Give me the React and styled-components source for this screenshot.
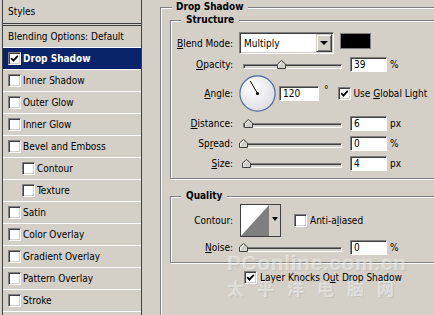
import styled, { createGlobalStyle } from "styled-components";

const FONT = `"DejaVu Sans Condensed", "Liberation Sans", sans-serif`;

const GlobalStyle = createGlobalStyle`
  html, body {
    margin: 0;
    padding: 0;
    background: #d4d0c8;
    overflow: hidden;
  }
  body {
    font-family: ${FONT};
    font-size: 10px;
    color: #000;
  }
`;

const Window = styled.div`
  position: relative;
  display: flex;
  width: 434px;
  height: 315px;
  overflow: hidden;
  background: #d4d0c8;
`;

const StylesPanel = styled.div`
  flex: 0 0 140px;
  box-sizing: border-box;
  margin-left: 2px;
  height: 100%;
  border-left: 1px solid #404040;
  border-right: 1px solid #404040;
`;

const PanelHead = styled.div`
  height: 23px;
  line-height: 23px;
  padding-left: 5px;
  border-bottom: 3px double #404040;
`;

const StyleRow = styled.div`
  display: flex;
  align-items: center;
  height: 21px;
  padding-left: ${(p) => (p.$sub ? 19 : 5)}px;
  border-bottom: 1px solid #fff;
  background: ${(p) => (p.$selected ? "#0a246a" : "transparent")};
  color: ${(p) => (p.$selected ? "#fff" : "#000")};
  font-weight: ${(p) => (p.$selected ? "bold" : "normal")};
  white-space: nowrap;
`;

const Box = styled.span`
  flex: 0 0 auto;
  display: inline-flex;
  align-items: center;
  justify-content: center;
  box-sizing: border-box;
  width: 13px;
  height: 13px;
  margin-right: ${(p) => p.$gap ?? 2}px;
  margin-left: ${(p) => p.$left ?? 0}px;
  background: #fff;
  border: 1px solid;
  border-color: #808080 #fff #fff #808080;
  box-shadow: inset 1px 1px 0 #404040, inset -1px -1px 0 #d4d0c8;
`;

function Checkbox({ checked, gap, left }) {
  return (
    <Box $gap={gap} $left={left}>
      {checked && (
        <svg width="9" height="9" viewBox="0 0 9 9">
          <path d="M1.2 4.2 L3.4 6.6 L7.8 1.8" fill="none" stroke="#000" strokeWidth="1.8" />
        </svg>
      )}
    </Box>
  );
}

const Main = styled.div`
  flex: 1;
  padding: 7px 0 0 18px;
`;

const Group = styled.div`
  position: relative;
  box-sizing: border-box;
  width: ${(p) => p.$w}px;
  height: ${(p) => (p.$h ? `${p.$h}px` : "auto")};
  margin-top: ${(p) => p.$top ?? 0}px;
  padding: ${(p) => p.$pad};
  border: 1px solid #808080;
  box-shadow: inset 1px 1px 0 #fff, 1px 1px 0 #fff;
`;

const Legend = styled.span`
  position: absolute;
  top: -8px;
  left: ${(p) => p.$left}px;
  padding: 0 ${(p) => p.$padX}px;
  line-height: 14px;
  background: #d4d0c8;
  font-weight: bold;
`;

const Row = styled.div`
  display: flex;
  align-items: center;
  height: ${(p) => p.$h}px;
  white-space: nowrap;
`;

const Label = styled.span`
  flex: 0 0 62px;
  margin-right: 6px;
  text-align: right;
`;

const Key = styled.span`
  text-decoration: underline;
  text-underline-offset: 1px;
`;

const Select = styled.div`
  display: flex;
  align-items: center;
  justify-content: space-between;
  box-sizing: border-box;
  width: 95px;
  height: 22px;
  padding: 0 1px 0 4px;
  background: #fff;
  border: 1px solid;
  border-color: #808080 #fff #fff #808080;
  box-shadow: inset 1px 1px 0 #404040, inset -1px -1px 0 #d4d0c8;
`;

const DropButton = styled.span`
  display: flex;
  align-items: center;
  justify-content: center;
  box-sizing: border-box;
  width: 16px;
  height: 18px;
  background: #d4d0c8;
  border: 1px solid;
  border-color: #d4d0c8 #404040 #404040 #d4d0c8;
  box-shadow: inset 1px 1px 0 #fff, inset -1px -1px 0 #808080;

  &::after {
    content: "";
    border-left: 4px solid transparent;
    border-right: 4px solid transparent;
    border-top: 4px solid #000;
  }
`;

const Swatch = styled.span`
  align-self: flex-start;
  box-sizing: border-box;
  width: 31px;
  height: 16px;
  margin: 1px 0 0 6px;
  background: #000;
  border: 1px solid #808080;
`;

const Slider = styled.div`
  position: relative;
  flex: 0 0 99px;
  margin-left: 4px;
  height: 9px;
  display: flex;
  align-items: flex-end;
`;

const Track = styled.div`
  box-sizing: border-box;
  width: 100%;
  height: 5px;
  background: #d4d0c8;
  border: 1px solid;
  border-color: #808080 #fff #fff #808080;
  box-shadow: inset 1px 1px 0 #404040;
`;

const Thumb = styled.svg`
  position: absolute;
  bottom: 0;
  width: 9px;
  height: 9px;
`;

function Range({ pos }) {
  return (
    <Slider>
      <Track />
      <Thumb viewBox="0 0 9 9" style={{ left: `calc(${pos}% - 4.5px)` }}>
        <polygon points="0.5,8.5 0.5,4 4.5,0.5 8.5,4 8.5,8.5" fill="#d4d0c8" stroke="#404040" />
        <polyline points="1.5,7.5 1.5,4.4 4.5,1.8" fill="none" stroke="#fff" />
      </Thumb>
    </Slider>
  );
}

const Field = styled.div`
  flex: 0 0 auto;
  box-sizing: border-box;
  width: ${(p) => p.$w ?? 37}px;
  height: 15px;
  margin-left: ${(p) => p.$ml ?? 8}px;
  padding-left: 3px;
  line-height: 13px;
  background: #fff;
  border: 1px solid;
  border-color: #808080 #fff #fff #808080;
  box-shadow: inset 1px 1px 0 #404040;
`;

const Unit = styled.span`
  margin-left: 3px;
`;

const Degree = styled.span`
  align-self: flex-start;
  margin: 10px 0 0 5px;
`;

const CheckLabel = styled.span`
  display: inline-flex;
  align-items: center;
  margin-left: ${(p) => p.$ml ?? 0}px;
`;

const ContourPick = styled.div`
  display: flex;
  box-sizing: border-box;
  width: 41px;
  height: 33px;
  margin-left: 1px;
  border: 1px solid #404040;
  background: #d4d0c8;
`;

const ContourArrow = styled.span`
  flex: 1;
  display: flex;
  justify-content: center;
  padding-top: 12px;

  &::after {
    content: "";
    height: 0;
    border-left: 3px solid transparent;
    border-right: 3px solid transparent;
    border-top: 4px solid #000;
  }
`;

const KnockRow = styled.div`
  display: flex;
  align-items: center;
  height: 13px;
  margin: 8px 0 0 74px;
  white-space: nowrap;
`;

const Watermark = styled.div`
  position: absolute;
  left: ${(p) => p.$x}px;
  top: ${(p) => p.$y}px;
  font-family: ${(p) => (p.$cjk ? `"Noto Sans CJK SC", sans-serif` : `"Liberation Sans", sans-serif`)};
  font-size: ${(p) => p.$size}px;
  line-height: ${(p) => p.$lh}px;
  font-weight: bold;
  letter-spacing: ${(p) => p.$ls}px;
  color: rgba(255, 255, 255, 0.42);
  text-shadow: 1px 1px 0 rgba(160, 156, 150, 0.25);
  white-space: nowrap;
  pointer-events: none;
`;

const effects = [
  { name: "Drop Shadow", checked: true, selected: true },
  { name: "Inner Shadow" },
  { name: "Outer Glow" },
  { name: "Inner Glow" },
  { name: "Bevel and Emboss" },
  { name: "Contour", sub: true },
  { name: "Texture", sub: true },
  { name: "Satin" },
  { name: "Color Overlay" },
  { name: "Gradient Overlay" },
  { name: "Pattern Overlay" },
  { name: "Stroke" },
];

function AngleDial({ angle }) {
  const r = 14.5;
  const a = (angle * Math.PI) / 180;
  const x = 18.5 + Math.cos(a) * r;
  const y = 18.5 - Math.sin(a) * r;
  return (
    <svg width="37" height="37" viewBox="0 0 37 37">
      <defs>
        <radialGradient id="dialFill" cx="0.4" cy="0.35" r="0.7">
          <stop offset="0" stopColor="#ffffff" />
          <stop offset="1" stopColor="#dcdce2" />
        </radialGradient>
      </defs>
      <circle cx="18.5" cy="18.5" r="17.6" fill="url(#dialFill)" stroke="#4a67a0" strokeWidth="1.2" />
      <line x1="18.5" y1="18.5" x2={x} y2={y} stroke="#000" strokeWidth="1" />
      <circle cx="18.5" cy="18.5" r="1.6" fill="#000" />
    </svg>
  );
}

export default function App() {
  return (
    <>
      <GlobalStyle />
      <Window>
        <StylesPanel>
          <PanelHead>Styles</PanelHead>
          <StyleRow>Blending Options: Default</StyleRow>
          {effects.map((fx) => (
            <StyleRow key={fx.name} $sub={fx.sub} $selected={fx.selected}>
              <Checkbox checked={fx.checked} />
              {fx.name}
            </StyleRow>
          ))}
        </StylesPanel>

        <Main>
          <Group $w={320} $h={340} $pad="12px 0 0 9px">
            <Legend $left={11} $padX={4}>Drop Shadow</Legend>

            <Group $w={300} $pad="11px 0 5px 0">
              <Legend $left={10} $padX={5}>Structure</Legend>
              <Row $h={22}>
                <Label>
                  <Key>B</Key>lend Mode:
                </Label>
                <Select>
                  Multiply
                  <DropButton />
                </Select>
                <Swatch />
              </Row>
              <Row $h={20}>
                <Label>
                  <Key>O</Key>pacity:
                </Label>
                <Range pos={39} />
                <Field>39</Field>
                <Unit>%</Unit>
              </Row>
              <Row $h={39}>
                <Label>
                  <Key>A</Key>ngle:
                </Label>
                <AngleDial angle={120} />
                <Field $w={40} $ml={3}>120</Field>
                <Degree>°</Degree>
                <CheckLabel $ml={9}>
                  <Checkbox checked gap={3} />
                  <span>
                    Use <Key>G</Key>lobal Light
                  </span>
                </CheckLabel>
              </Row>
              <Row $h={20}>
                <Label>
                  <Key>D</Key>istance:
                </Label>
                <Range pos={5.5} />
                <Field>6</Field>
                <Unit>px</Unit>
              </Row>
              <Row $h={20}>
                <Label>
                  Sp<Key>r</Key>ead:
                </Label>
                <Range pos={0} />
                <Field>0</Field>
                <Unit>%</Unit>
              </Row>
              <Row $h={20}>
                <Label>
                  <Key>S</Key>ize:
                </Label>
                <Range pos={4} />
                <Field>4</Field>
                <Unit>px</Unit>
              </Row>
            </Group>

            <Group $w={300} $top={17} $pad="7px 0 5px 0">
              <Legend $left={10} $padX={5}>Quality</Legend>
              <Row $h={33}>
                <Label>Contour:</Label>
                <ContourPick>
                  <svg width="28" height="31" viewBox="0 0 28 31">
                    <rect width="28" height="31" fill="#fff" />
                    <polygon points="28,0 28,31 0,31" fill="#7f7f7f" />
                  </svg>
                  <ContourArrow />
                </ContourPick>
                <CheckLabel $ml={13}>
                  <Checkbox gap={3} />
                  <span>
                    Anti-a<Key>l</Key>iased
                  </span>
                </CheckLabel>
              </Row>
              <Row $h={20}>
                <Label>
                  <Key>N</Key>oise:
                </Label>
                <Range pos={0} />
                <Field>0</Field>
                <Unit>%</Unit>
              </Row>
            </Group>

            <KnockRow>
              <Checkbox checked gap={3} />
              <span>
                Layer Knocks O<Key>u</Key>t Drop Shadow
              </span>
            </KnockRow>
          </Group>
        </Main>

        <Watermark $x={227} $y={255} $size={21} $lh={15} $ls={0.6}>
          PConline.com.cn
        </Watermark>
        <Watermark $x={227} $y={281} $size={17} $lh={14} $ls={13} $cjk>
          太平洋电脑网
        </Watermark>
      </Window>
    </>
  );
}
